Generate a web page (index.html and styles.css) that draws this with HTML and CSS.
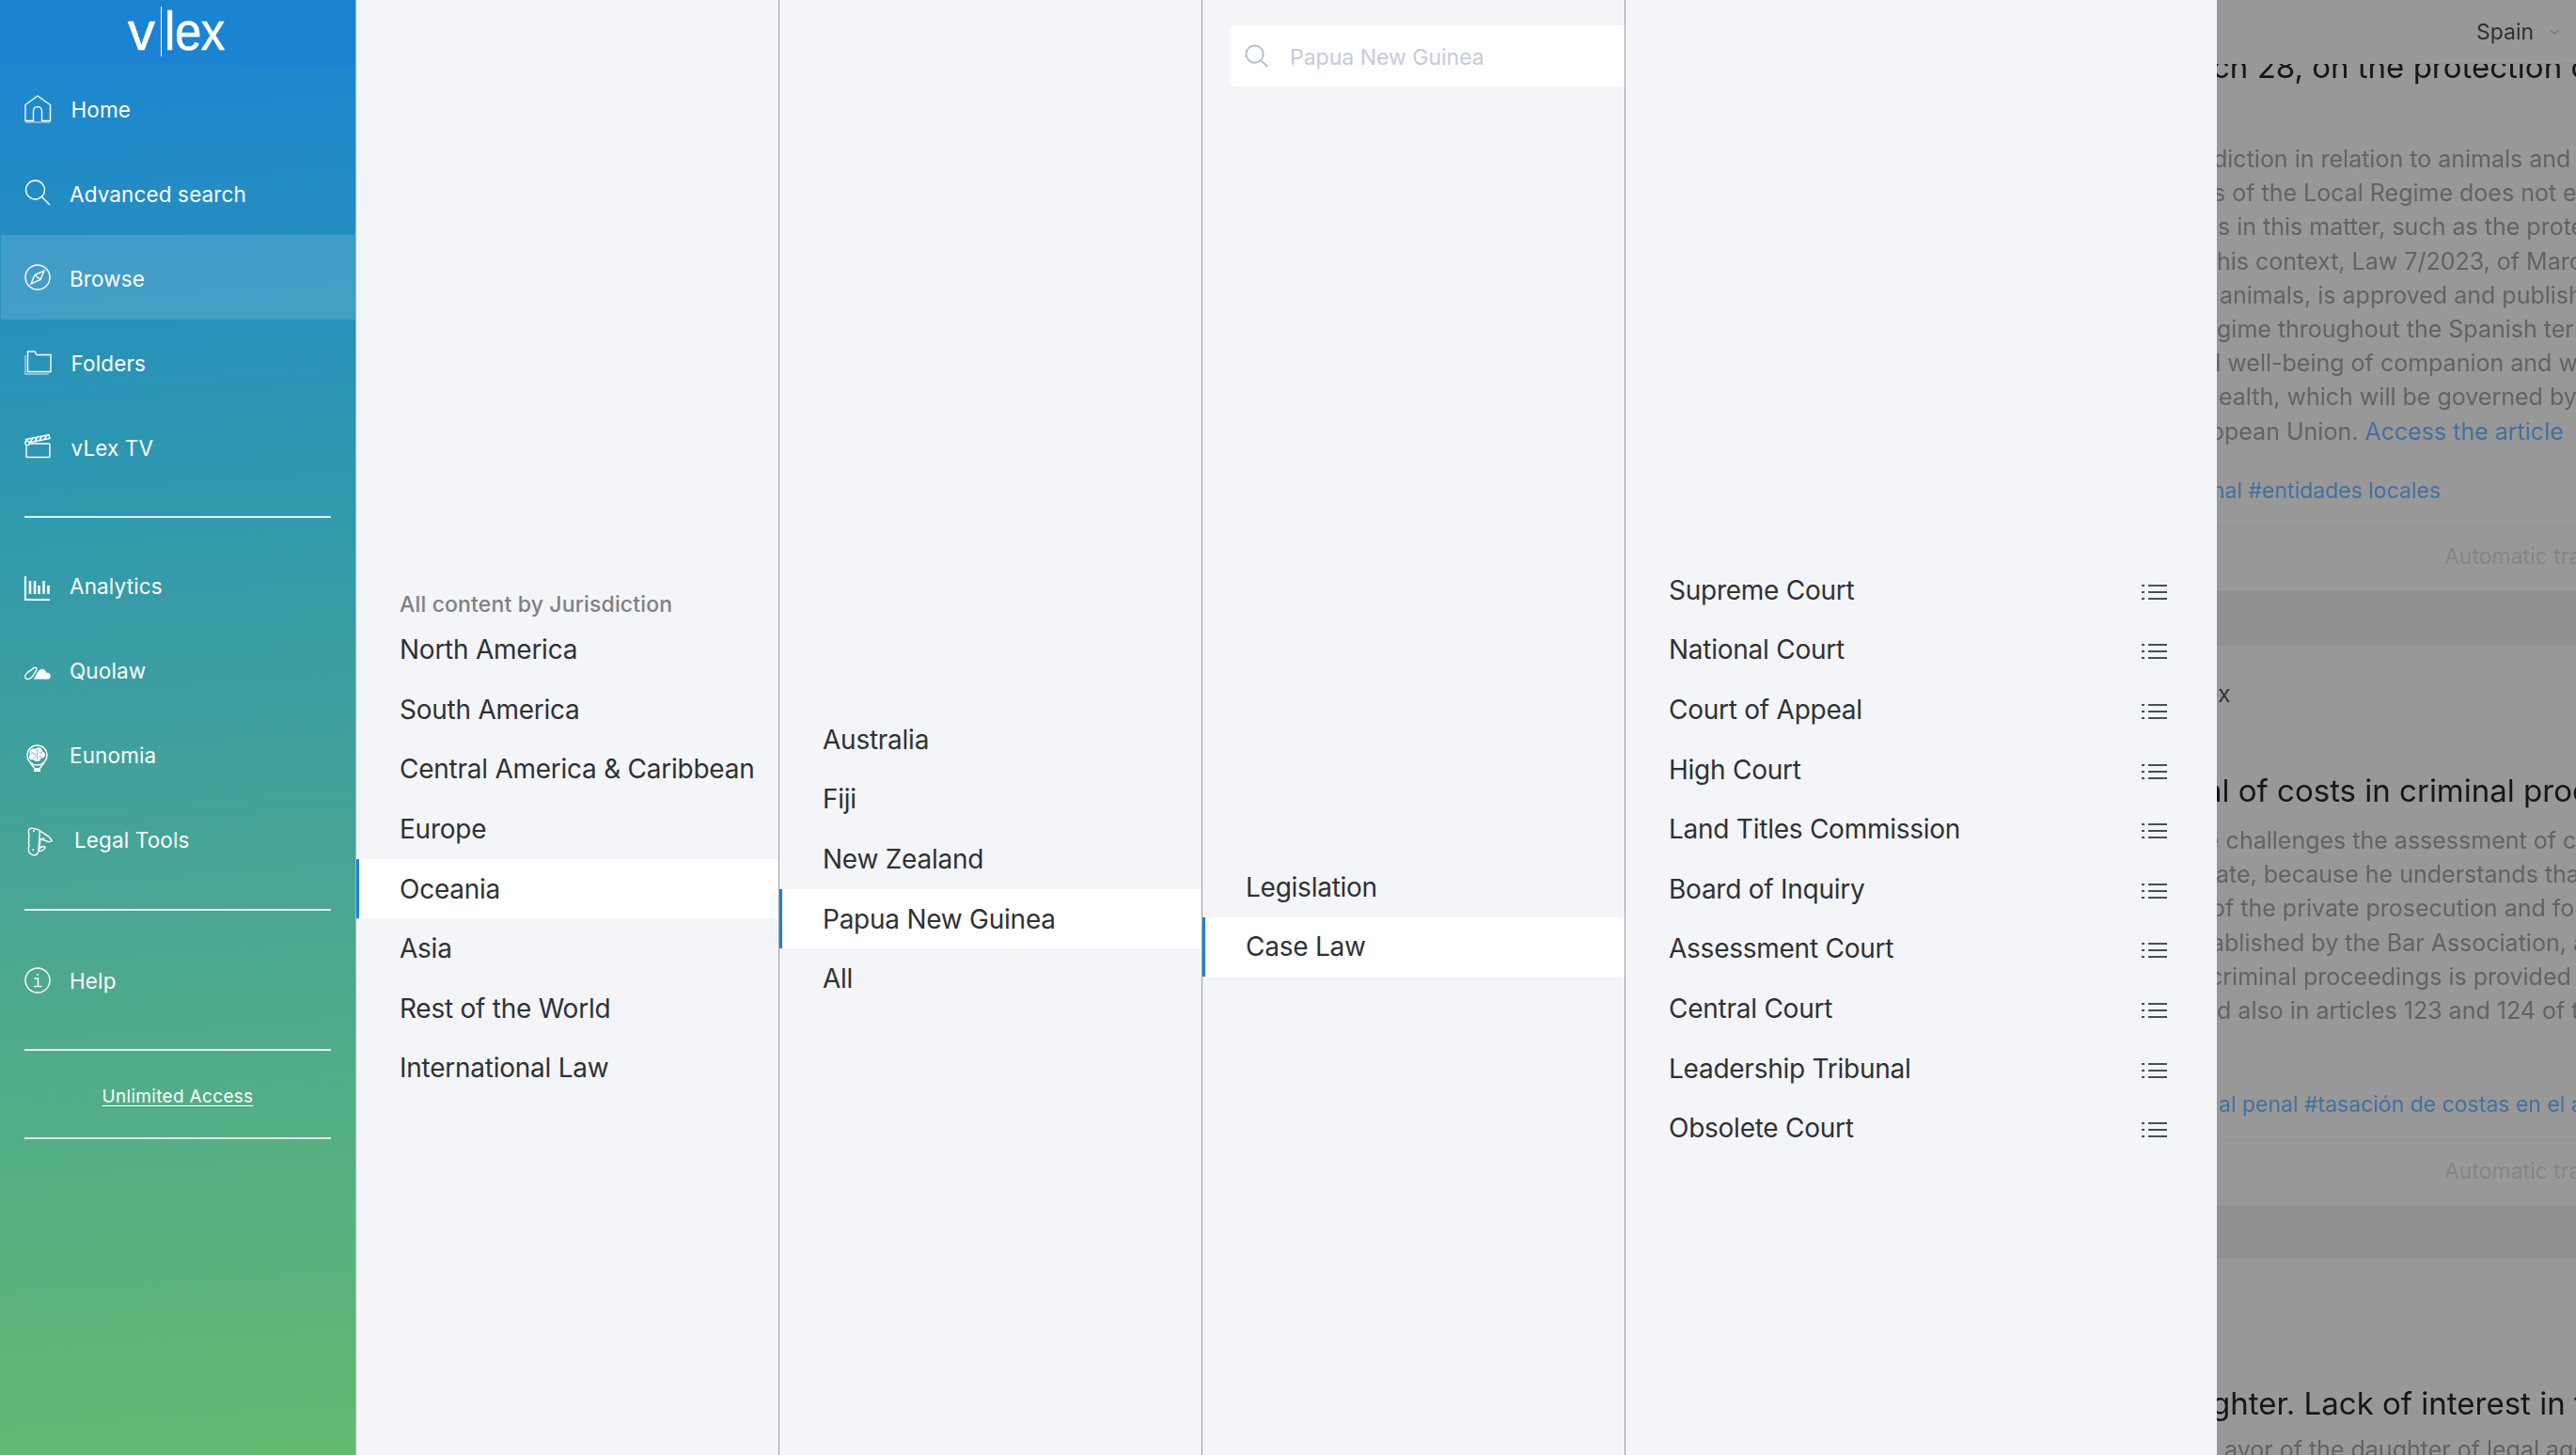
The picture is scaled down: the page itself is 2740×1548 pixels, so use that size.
FILE: index.html
```html
<!DOCTYPE html>
<html lang="en">
<head>
<meta charset="utf-8">
<title>vLex</title>
<link rel="stylesheet" href="styles.css">
</head>
<body>
<div class="app">
  <nav class="sidebar">
    <header class="logo"><span class="logo-v">v</span><span class="logo-bar"></span><span class="logo-lex">lex</span></header>
    <a class="nav-item">
      <svg class="ico" viewBox="0 0 28 28"><path d="M1 27.500V10.500L14 1 27.500 10.500V27.500H18.500V17a4.500 4.500 0 0 0-9 0V27.500Z"/><path class="faint" d="M1 29H27.500"/></svg>
      <span class="lbl lbl-b">Home</span></a>
    <a class="nav-item">
      <svg class="ico" viewBox="0 0 28 28"><circle cx="11.500" cy="11" r="10"/><path d="M18.500 18.500 27 27"/></svg>
      <span class="lbl">Advanced search</span></a>
    <a class="nav-item active">
      <svg class="ico" viewBox="0 0 28 28"><circle cx="14" cy="14" r="13"/><path d="M21 7 11 11.500 7 21 17 16.500ZM11 11.500 17 16.500"/></svg>
      <span class="lbl">Browse</span></a>
    <a class="nav-item">
      <svg class="ico" viewBox="0 0 28 28"><path d="M3.500 24.500V3H11L13 6.500H28V24.500Z"/><path class="faint" d="M1 7V27H26"/></svg>
      <span class="lbl lbl-b">Folders</span></a>
    <a class="nav-item">
      <svg class="ico" viewBox="0 0 28 28"><rect x="2" y="11" width="25" height="14.500" rx="1"/><path d="M1.500 6.500 26 1.500 27 5.500 3 10.500ZM6 9.500 9 5M11 8.500 14 4M16 7.500 19 3M21 6.500 24 2"/><circle class="solid-ring" cx="3" cy="10.500" r="2.200"/></svg>
      <span class="lbl lbl-b">vLex TV</span></a>
    <hr class="rule rule-a">
    <a class="nav-item nav-mid">
      <svg class="ico" viewBox="0 0 28 28"><path class="thick" d="M1 2V27H27"/><path class="bars" d="M6 7V21M11 7V21M15.500 12V21M20.500 7V21M25.500 12V21"/></svg>
      <span class="lbl">Analytics</span></a>
    <a class="nav-item nav-mid">
      <svg class="ico" viewBox="0 0 28 28"><path d="M3 21.500C.5 21.500 0 19 1.500 16.500 3 14 5 13 7 12 9 10 12 8 13 10 13.500 12 11 14.500 10 16.500 8.500 19.500 6 21.500 3 21.500Z"/><path class="solid" d="M9.500 21.500C12 20 13 13 17.500 11 20.500 10 22.500 12 23.500 15 26 14 28 16 27.700 19 27.500 21 26 21.500 25 21.500Z"/></svg>
      <span class="lbl">Quolaw</span></a>
    <a class="nav-item nav-mid">
      <svg class="ico" viewBox="0 0 28 28"><circle cx="13.500" cy="12.500" r="10.500"/><g class="solid"><circle cx="9.500" cy="9.500" r="4"/><circle cx="15" cy="8.500" r="4"/><circle cx="18.500" cy="12" r="3.500"/><circle cx="8.500" cy="14" r="3.500"/><circle cx="13.500" cy="15" r="4"/></g><path class="brain" d="M7 10h3l2 3M13.500 6v11M16 10h3M15 14h3M9 16l3-2"/><path d="M6 20.500 10.500 26M21 20.500 16.500 26"/><path class="solid" d="M10 26h7v4h-7Z"/></svg>
      <span class="lbl">Eunomia</span></a>
    <a class="nav-item nav-mid">
      <svg class="ico ico-tools" viewBox="43 33 78 92"><path class="knife" d="M54 36Q44 36 44 47L46 60 44 70 46 76 44 84 46 90 44 100Q43 116 56 121 66 124 72 118L76 108Q88 112 96 100 100 96 92 94 84 94 80 100L78 104 82 70 110 80 119 76 108 62 80 44 74 40Z"/><path class="knife" d="M80 44 76 108M96 72 88 66"/><path class="knife-dot" d="M58 45h6M61 42v6M56 105h6M59 102v6"/></svg>
      <span class="lbl lbl-c">Legal Tools</span></a>
    <hr class="rule rule-b">
    <a class="nav-item">
      <svg class="ico" viewBox="0 0 28 28"><circle cx="14" cy="14" r="13"/><path d="M10.500 12h4V20.500M10 20.500h8.500M14 7v2"/></svg>
      <span class="lbl">Help</span></a>
    <hr class="rule rule-c">
    <a class="access">Unlimited Access</a>
    <hr class="rule rule-d">
  </nav>

  <section class="col col-1">
    <div class="col-label">All content by Jurisdiction</div>
    <ul class="list">
      <li>North America</li><li>South America</li><li>Central America &amp; Caribbean</li><li>Europe</li>
      <li class="sel">Oceania</li><li>Asia</li><li>Rest of the World</li><li>International Law</li>
    </ul>
  </section>

  <section class="col col-2">
    <ul class="list">
      <li>Australia</li><li>Fiji</li><li>New Zealand</li><li class="sel">Papua New Guinea</li><li>All</li>
    </ul>
  </section>

  <section class="col col-3">
    <div class="search">
      <svg class="search-ico" viewBox="0 0 26 26"><circle cx="11" cy="11" r="9.500"/><path d="M17.800 17.800 25 25"/></svg>
      <span class="placeholder">Papua New Guinea</span>
    </div>
    <ul class="list">
      <li>Legislation</li><li class="sel">Case Law</li>
    </ul>
  </section>

  <section class="col col-4">
    <ul class="list list-icons">
      <li><span>Supreme Court</span><svg class="list-ico" viewBox="0 0 27 18"><path d="M7 2H27M7 9H27M7 16H27M0 2H3M0 9H3M0 16H3"/></svg></li>
      <li><span>National Court</span><svg class="list-ico" viewBox="0 0 27 18"><path d="M7 2H27M7 9H27M7 16H27M0 2H3M0 9H3M0 16H3"/></svg></li>
      <li><span>Court of Appeal</span><svg class="list-ico" viewBox="0 0 27 18"><path d="M7 2H27M7 9H27M7 16H27M0 2H3M0 9H3M0 16H3"/></svg></li>
      <li><span>High Court</span><svg class="list-ico" viewBox="0 0 27 18"><path d="M7 2H27M7 9H27M7 16H27M0 2H3M0 9H3M0 16H3"/></svg></li>
      <li><span>Land Titles Commission</span><svg class="list-ico" viewBox="0 0 27 18"><path d="M7 2H27M7 9H27M7 16H27M0 2H3M0 9H3M0 16H3"/></svg></li>
      <li><span>Board of Inquiry</span><svg class="list-ico" viewBox="0 0 27 18"><path d="M7 2H27M7 9H27M7 16H27M0 2H3M0 9H3M0 16H3"/></svg></li>
      <li><span>Assessment Court</span><svg class="list-ico" viewBox="0 0 27 18"><path d="M7 2H27M7 9H27M7 16H27M0 2H3M0 9H3M0 16H3"/></svg></li>
      <li><span>Central Court</span><svg class="list-ico" viewBox="0 0 27 18"><path d="M7 2H27M7 9H27M7 16H27M0 2H3M0 9H3M0 16H3"/></svg></li>
      <li><span>Leadership Tribunal</span><svg class="list-ico" viewBox="0 0 27 18"><path d="M7 2H27M7 9H27M7 16H27M0 2H3M0 9H3M0 16H3"/></svg></li>
      <li><span>Obsolete Court</span><svg class="list-ico" viewBox="0 0 27 18"><path d="M7 2H27M7 9H27M7 16H27M0 2H3M0 9H3M0 16H3"/></svg></li>
    </ul>
  </section>

  <main class="behind">
    <div class="topbar"><div class="topbar-right"><span class="spain">Spain</span><svg class="chev" viewBox="0 0 12 6"><path d="M1 1l5 3.500L11 1"/></svg></div></div>
    <article class="card card-one">
      <h2 class="title t1">ch 28, on the protection of animals</h2>
      <div class="body b1">
        <p>diction in relation to animals and</p>
        <p>s of the Local Regime does not exercise</p>
        <p>s in this matter, such as the protection</p>
        <p>his context, Law 7/2023, of March 28</p>
        <p>animals, is approved and published</p>
        <p>gime throughout the Spanish territory</p>
        <p>d well-being of companion and wild</p>
        <p>ealth, which will be governed by the</p>
        <p>opean Union. <a class="link">Access the article</a></p>
      </div>
      <div class="tags tg1">nal #entidades locales</div>
      <div class="auto a1">Automatic translation</div>
    </article>
    <div class="band"></div>
    <article class="card card-two">
      <div class="source">ex</div>
      <h2 class="title t2">al of costs in criminal proceedings</h2>
      <div class="body b2">
        <p>e challenges the assessment of costs</p>
        <p>ate, because he understands that</p>
        <p>of the private prosecution and for</p>
        <p>ablished by the Bar Association, and</p>
        <p>criminal proceedings is provided in</p>
        <p>d also in articles 123 and 124 of the</p>
      </div>
      <div class="tags tg2">al penal #tasación de costas en el ámbito</div>
      <div class="auto a2">Automatic translation</div>
    </article>
    <div class="band"></div>
    <article class="card card-three">
      <h2 class="title t3">ghter. Lack of interest in the</h2>
      <div class="body b3"><p>avor of the daughter of legal age</p></div>
    </article>
  </main>
</div>
</body>
</html>
```
FILE: styles.css
```css
* { box-sizing: border-box; }
html, body { margin: 0; padding: 0; height: 100%; }
body { font-family: Inter, "Liberation Sans", sans-serif; background: #f4f5f8; overflow: hidden; }
.app { display: flex; width: 2740px; height: 1548px; overflow: hidden; }

/* sidebar */
.sidebar {
  width: 379px; flex: none; height: 1548px; color: #fff;
  background: linear-gradient(176deg, #1a84d4 0%, #2f98ae 34%, #4aa693 62%, #63ba70 100%);
  border-right: 1px solid #a9b4ba;
  display: flex; flex-direction: column;
}
.logo { height: 70px; background: #1a84d2; display: flex; align-items: flex-start; flex: none; padding-left: 136px; }
.logo-v, .logo-lex { font-family: "Liberation Sans", sans-serif; font-size: 58px; line-height: 66px; -webkit-text-stroke: .6px #fff; }
.logo-lex { letter-spacing: -.5px; transform: scaleX(.88); transform-origin: left center; }
.logo-bar { width: 1.500px; height: 53px; background: #fff; margin: 7px 3px 0 5.700px; }
.nav-item { height: 90px; flex: none; padding-left: 26px; display: flex; align-items: center; gap: 20px; font-size: 22.500px; letter-spacing: .13px; }
.nav-item:nth-of-type(-n+5) .lbl { margin-top: 3px; }
.nav-mid .lbl { margin-bottom: 3px; }
.nav-item.active { background: rgba(255,255,255,.13); margin-left: 1px; padding-left: 25px; }
.ico { width: 28px; height: 28px; flex: none; fill: none; stroke: #fff; stroke-width: 1.400; overflow: visible; }
.ico .thick { stroke-width: 2.200; }
.ico .bars { stroke-width: 2.600; }
.ico .faint { opacity: .6; }
.ico .solid { fill: #fff; stroke: none; }
.ico .solid-ring { fill: #2e92b8; }
.ico .brain { stroke: #5aa9a6; stroke-width: .8; }
.ico-tools { width: 26px; height: 31px; margin-left: 4px; margin-right: -2px; }
.ico-tools .knife { stroke-width: 4; stroke-linejoin: round; }
.ico-tools .knife-dot { stroke-width: 3; }
.lbl-b { margin-left: 1.500px; }
.lbl-c { margin-left: 5px; }
.rule { border: 0; height: 2px; flex: none; background: rgba(255,255,255,.85); margin: 0 26px; }
.rule-a { margin-top: 29px; margin-bottom: 29px; }
.rule-b { margin-top: 27px; margin-bottom: 29px; }
.rule-c { margin-top: 28px; }
.access { height: 92px; flex: none; padding-top: 5px; display: flex; align-items: center; justify-content: center; font-size: 19px; text-decoration: underline; text-underline-offset: 3px; letter-spacing: .32px; }

/* columns */
.col { width: 450px; flex: none; height: 1548px; background: #f4f5f8; border-right: 1px solid #9b9ca1; color: #2f3134; }
.col-1 { padding-top: 627px; }
.col-2 { padding-top: 755px; }
.col-3 { padding-top: 27px; }
.col-4 { width: 629px; padding-top: 596px; border-right: 0; }
.col-label { font-size: 23px; font-weight: 500; color: #7f8084; height: 32.500px; line-height: 32px; padding-left: 46px; letter-spacing: .15px; }
.list { list-style: none; margin: 0; padding: 0; }
.list li { height: 63.600px; display: flex; align-items: center; padding-left: 43px; font-size: 28px; letter-spacing: -.25px; border-left: 3px solid transparent; }
.list li.sel { background: #fff; border-left-color: #1a84d4; }
.list-icons li { justify-content: space-between; padding-right: 53px; }
.list-ico { width: 27px; height: 18px; flex: none; margin-top: 4px; fill: none; stroke: #44505c; stroke-width: 2; }

.search { width: 420px; margin-left: 29px; height: 65px; background: #fff; border-radius: 7px 0 0 7px; display: flex; align-items: center; padding-left: 16px; gap: 23px; margin-bottom: 820px; }
.search-ico { width: 25px; height: 25px; fill: none; stroke: #b4bdcd; stroke-width: 2; flex: none; }
.placeholder { font-size: 23px; color: #c6cadb; padding-top: 2px; }

/* dimmed page behind */
.behind { flex: 1; min-width: 0; background: #989898; overflow: hidden; color: #161616; }
.topbar { height: 68px; display: flex; justify-content: flex-end; background: #989898; position: relative; z-index: 1; font-size: 23px; color: #303030; filter: blur(.4px); }
.topbar-right { width: 164px; border-left: 1px solid #939393; border-bottom: 1px solid #939393; padding-left: 57px; display: flex; align-items: center; gap: 16px; }
.chev { width: 12px; height: 6px; flex: none; fill: none; stroke: #787878; stroke-width: 1.500; }
.card { filter: blur(.4px); display: flow-root; }
.card p { margin: 0; }
.body, .tags, .auto, .title, .source { white-space: nowrap; }
.title { margin: 0; font-weight: 400; font-size: 33px; line-height: 44px; }
.body { font-size: 25px; color: #626267; line-height: 36.200px; }
.link, .tags { color: #43709f; }
.tags { font-size: 23px; line-height: 28px; }
.auto { font-size: 23px; line-height: 28px; color: #858585; padding-left: 242px; border-top: 1px solid #939393; }
.band { height: 57px; background: #909090; }
.card-one { height: 561px; }
.t1 { margin-top: -19px; margin-left: -5px; }
.b1 { margin-top: 58px; }
.b1 p:nth-child(1) { margin-left: -4px; }
.b1 p:nth-child(2) { margin-left: -4px; }
.b1 p:nth-child(3) { margin-left: 1px; }
.b1 p:nth-child(5) { margin-left: 3px; }
.b1 p:nth-child(7) { margin-left: -11px; }
.b1 p:nth-child(8) { margin-left: 2px; }
.b1 p:nth-child(9) { margin-left: -7px; }
.tg1 { margin-top: 31px; margin-left: -5px; }
.a1 { margin-top: 24px; padding-top: 17px; }
.card-two { height: 596px; }
.source { font-size: 25px; line-height: 30px; color: #333; padding-top: 37px; height: 133px; margin-left: -13px; }
.t2 { margin-left: -13px; }
.b2 { margin-top: 13px; }
.b2 p:nth-child(1) { margin-left: -12px; }
.b2 p:nth-child(2) { margin-left: -1px; }
.b2 p:nth-child(3) { margin-left: -6px; }
.b2 p:nth-child(4) { margin-left: -6px; }
.b2 p:nth-child(5) { margin-left: -8px; }
.tg2 { margin-top: 68px; margin-left: 2px; }
.a2 { margin-top: 23px; padding-top: 19px; }
.card-three { padding-top: 132px; }
.t3 { margin-left: -6px; }
.b3 { margin-top: 9px; padding-left: 8px; }
```
